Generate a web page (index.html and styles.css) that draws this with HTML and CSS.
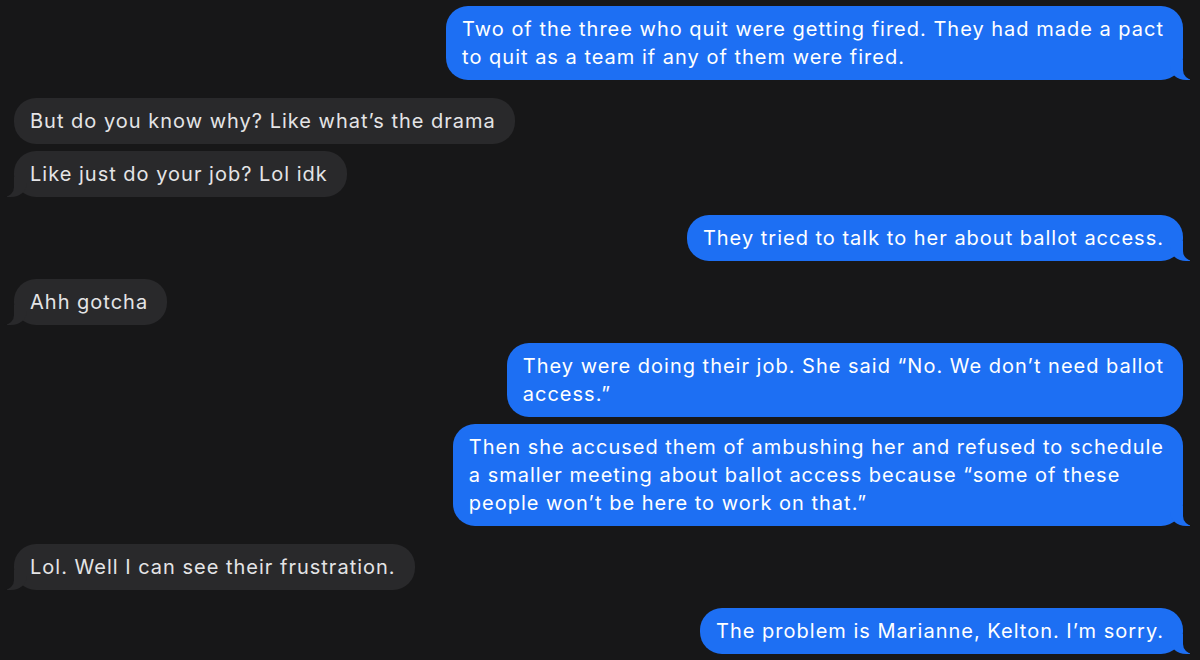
FILE: index.html
```html
<!DOCTYPE html>
<html lang="en">
<head>
<meta charset="utf-8">
<title>Messages</title>
<link rel="stylesheet" href="styles.css">
</head>
<body>
<div class="thread">
  <div class="msg sent tail gap-top-first">Two of the three who quit were getting fired. They had made a pact<br>to quit as a team if any of them were fired.</div>
  <div class="msg recv gap-big">But do you know why? Like what’s the drama</div>
  <div class="msg recv tail gap-small">Like just do your job? Lol idk</div>
  <div class="msg sent tail gap-big">They tried to talk to her about ballot access.</div>
  <div class="msg recv tail gap-big">Ahh gotcha</div>
  <div class="msg sent gap-big">They were doing their job. She said “No. We don’t need ballot<br>access.”</div>
  <div class="msg sent tail gap-small">Then she accused them of ambushing her and refused to schedule<br>a smaller meeting about ballot access because “some of these<br>people won’t be here to work on that.”</div>
  <div class="msg recv tail gap-big">Lol. Well I can see their frustration.</div>
  <div class="msg sent tail gap-big">The problem is Marianne, Kelton. I’m sorry.</div>
</div>
</body>
</html>
```
FILE: styles.css
```css
html, body {
  margin: 0;
  padding: 0;
  background: #171718;
  height: 660px;
  overflow: hidden;
}
.thread {
  display: flex;
  flex-direction: column;
  padding: 6px 17px 0 14px;
  font-family: Inter, "Noto Sans", sans-serif;
  font-size: 20px;
  line-height: 28px;
  letter-spacing: 1px;
}
.msg {
  position: relative;
  padding: 9px 19px 9px 16px;
  border-radius: 22px;
  max-width: 780px;
  white-space: nowrap;
}
.sent {
  align-self: flex-end;
  background: #1d6ff3;
  color: #ffffff;
}
.recv {
  align-self: flex-start;
  background: #29292b;
  color: #e4e4e6;
}
.gap-top-first { margin-top: 0; }
.gap-big { margin-top: 18px; }
.gap-small { margin-top: 7px; }

.tail::before,
.tail::after {
  content: "";
  position: absolute;
  bottom: 0;
  height: 20px;
}
.sent.tail::before {
  right: -7px;
  width: 20px;
  background: #1d6ff3;
  border-bottom-left-radius: 16px 14px;
}
.sent.tail::after {
  right: -26px;
  width: 26px;
  background: #171718;
  border-bottom-left-radius: 10px;
}
.recv.tail::before {
  left: -7px;
  width: 20px;
  background: #29292b;
  border-bottom-right-radius: 16px 14px;
}
.recv.tail::after {
  left: -26px;
  width: 26px;
  background: #171718;
  border-bottom-right-radius: 10px;
}
```
